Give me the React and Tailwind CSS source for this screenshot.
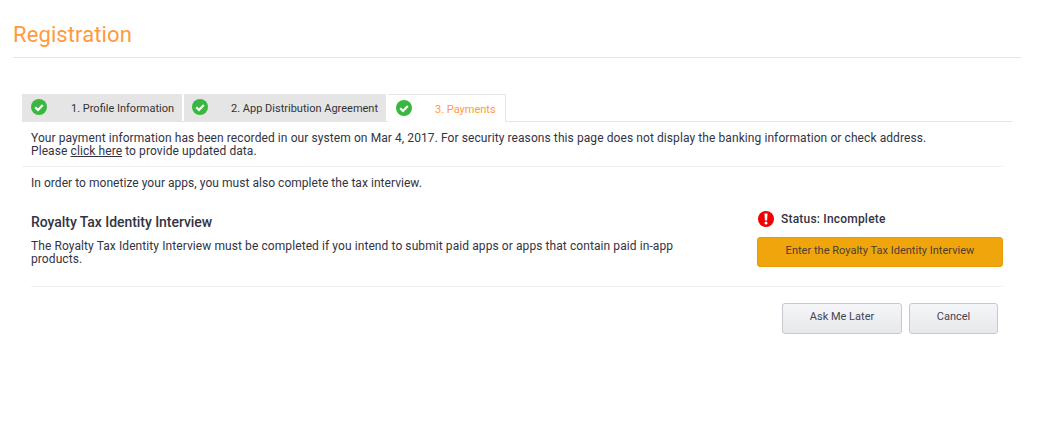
// App.jsx
const CheckIcon = () => (
  <svg width="16" height="16" viewBox="0 0 16 16" className="shrink-0">
    <circle cx="8" cy="8" r="8" fill="#39b83f" />
    <path d="M4.2 8.2 L7 11 L11.8 5.9" fill="none" stroke="#fff" strokeWidth="2.2" />
  </svg>
);

const AlertIcon = () => (
  <svg width="16" height="18" viewBox="0 0 16 18" className="shrink-0">
    <circle cx="8" cy="9" r="8" fill="#f00000" />
    <path d="M6.5 3.6 H9.5 L9.1 10.4 H6.9 Z" fill="#fff" />
    <circle cx="8" cy="12.9" r="1.5" fill="#fff" />
  </svg>
);

const Tab = ({ label, active, width, pad, gap }) => (
  <div
    className={
      active
        ? "h-[28px] flex items-start pt-[5px] bg-white border-t border-r border-[#e5e5e5] text-[#ff9a3c] relative whitespace-nowrap"
        : "h-[28px] flex items-start pt-[5px] bg-[#e5e5e5] text-[#333] whitespace-nowrap"
    }
    style={{ width, paddingLeft: pad }}
  >
    <CheckIcon />
    <span className="text-[11px] leading-[20px] tracking-normal" style={{ marginLeft: gap }}>{label}</span>
  </div>
);

export default function App() {
  return (
    <div
      className="w-[1051px] h-[443px] bg-white text-[12px] tracking-[0.085px] text-[#333344] overflow-hidden"
      style={{ fontFamily: "Roboto, sans-serif" }}
    >
      <div className="mx-[13px] w-[1008px] h-[58px] border-b border-[#e5e5e5] pt-[21px]">
        <h1 className="text-[22px] leading-[28px] tracking-[0.1px] text-[#ff9a3c]">Registration</h1>
      </div>

      <div className="ml-[22px] w-[990px] mt-[36px]">
        <div className="flex gap-[2px] h-[28px] border-b border-[#e5e5e5]">
          <Tab label="1. Profile Information" width={160} pad={9} gap={24} />
          <Tab label="2. App Distribution Agreement" width={202} pad={8} gap={23} />
          <Tab label="3. Payments" width={118} pad={8} gap={23} active />
        </div>

        <div className="pl-[9px] pt-[10px] pb-[8px] border-b border-[#f0f0f0] leading-[13px] w-[981px]">
          <p>Your payment information has been recorded in our system on Mar 4, 2017. For security reasons this page does not display the banking information or check address.</p>
          <p>
            Please <a className="underline">click here</a> to provide updated data.
          </p>
        </div>

        <p className="pl-[9px] pt-[10px] leading-[13px] tracking-[0.04px]">In order to monetize your apps, you must also complete the tax interview.</p>

        <div className="ml-[9px] w-[972px] mt-[19px] pb-[19px] border-b border-[#f0f0f0] flex justify-between">
          <div className="w-[670px] pt-[5px]">
            <h2 className="text-[14px] tracking-[-0.05px] font-medium leading-[16px]">Royalty Tax Identity Interview</h2>
            <p className="mt-[10px] leading-[13px]">The Royalty Tax Identity Interview must be completed if you intend to submit paid apps or apps that contain paid in-app products.</p>
          </div>
          <div className="w-[246px] pt-px">
            <div className="flex items-center gap-[7px] h-[18px] pl-px font-medium tracking-[0.2px]">
              <AlertIcon />
              <span>Status: Incomplete</span>
            </div>
            <button className="mt-[9px] w-full h-[30px] pb-[2px] rounded-[3px] bg-[#f0a50d] border border-[#e59c0a] text-[11px] tracking-[0.02px] text-[#4a4030]">
              Enter the Royalty Tax Identity Interview
            </button>
          </div>
        </div>

        <div className="w-[976px] flex justify-end gap-[7px] mt-[16px] text-[11px] tracking-normal text-[#444455]">
          <button className="w-[120px] h-[31px] pb-[3px] rounded-[3px] border border-[#c5c8ce] bg-gradient-to-b from-[#f5f6f8] to-[#e7e8eb]">Ask Me Later</button>
          <button className="w-[89px] h-[31px] pb-[3px] rounded-[3px] border border-[#c5c8ce] bg-gradient-to-b from-[#f5f6f8] to-[#e7e8eb]">Cancel</button>
        </div>
      </div>
    </div>
  );
}
